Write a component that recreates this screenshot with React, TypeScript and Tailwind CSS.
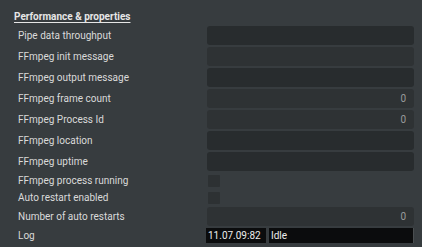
import React from "react";

type Row =
  | { label: string; kind: "text"; dark: boolean; value?: string }
  | { label: string; kind: "check" }
  | { label: string; kind: "log" };

const rows: Row[] = [
  { label: "Pipe data throughput", kind: "text", dark: true },
  { label: "FFmpeg init message", kind: "text", dark: false },
  { label: "FFmpeg output message", kind: "text", dark: true },
  { label: "FFmpeg frame count", kind: "text", dark: false, value: "0" },
  { label: "FFmpeg Process Id", kind: "text", dark: false, value: "0" },
  { label: "FFmpeg location", kind: "text", dark: true },
  { label: "FFmpeg uptime", kind: "text", dark: true },
  { label: "FFmpeg process running", kind: "check" },
  { label: "Auto restart enabled", kind: "check" },
  { label: "Number of auto restarts", kind: "text", dark: false, value: "0" },
  { label: "Log", kind: "log" },
];

export default function App() {
  return (
    <div
      className="w-[422px] h-[247px] bg-[#373c3f] overflow-hidden pt-[9px]"
      style={{ fontFamily: "Roboto, 'Noto Sans', sans-serif" }}
    >
      <div className="pl-[14px] h-[15px] text-[10px] leading-[15px] font-bold text-[#e6e6e6] underline underline-offset-[2px]">
        Performance &amp; properties
      </div>
      <div className="mt-[2px] flex flex-col gap-[2px] pl-[18px] pr-[8px]">
        {rows.map((r, i) => (
          <div key={i} className="grid grid-cols-[189px_1fr] items-center">
            <div className="text-[10px] leading-[15px] text-[#dadada] whitespace-nowrap">
              {r.label}
            </div>
            {r.kind === "text" && (
              <div
                className={
                  "h-[19px] rounded-[3px] flex items-center justify-end pr-[8px] text-[10px] text-[#9a9c9d] " +
                  (r.dark ? "bg-[#282c2e]" : "bg-[#2e3234]")
                }
              >
                {r.value}
              </div>
            )}
            {r.kind === "check" && (
              <div className="h-[15px] flex items-center">
                <div className="w-[12px] h-[12px] ml-[1px] bg-[#2d3133] rounded-[1px]" />
              </div>
            )}
            {r.kind === "log" && (
              <div className="h-[15px] ml-[-1px] flex text-[10px] leading-[15px] text-[#ececec] border-r border-[#4a4e50]">
                <div className="w-[60px] bg-[#0b0c0d] pl-[2px]">11.07.09:82</div>
                <div className="w-[3px]" />
                <div className="flex-1 bg-[#0b0c0d] pl-[2px]">Idle</div>
              </div>
            )}
          </div>
        ))}
      </div>
    </div>
  );
}
